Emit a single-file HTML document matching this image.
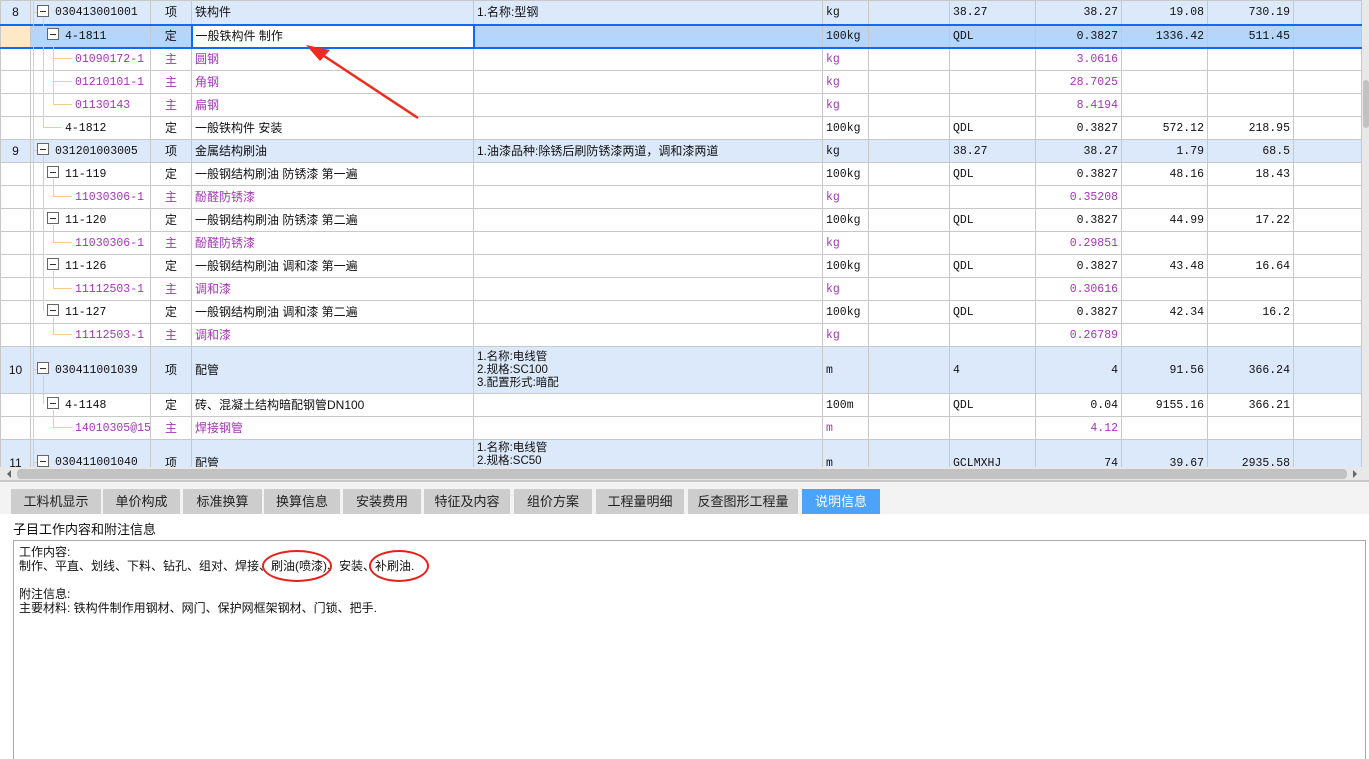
<!DOCTYPE html>
<html><head><meta charset="utf-8">
<style>
*{margin:0;padding:0;box-sizing:border-box}
body{width:1369px;height:759px;overflow:hidden;background:#fff;font-family:"Liberation Sans","Noto Sans CJK SC",sans-serif;font-size:12px;color:#111;position:relative}
#grid{position:absolute;left:0;top:0;width:1362px;height:467px;overflow:hidden;background:#fff}
table{border-collapse:collapse;table-layout:fixed;position:absolute;left:0;top:0;width:1361px}
td{border:1px solid #c8c8c8;height:23px;padding:0 3px;white-space:nowrap;overflow:hidden;vertical-align:middle;line-height:13px}
.m{font-family:"Liberation Mono","Noto Sans CJK SC",monospace;font-size:11.5px}
.r{text-align:right}
.c{text-align:center}
tr.x td{background:#dce9fb}
tr.s td{background:#b5d5fb;border-top:2px solid #0a6cf0;border-bottom:2px solid #0a6cf0}
tr.s td.n{background:#fde8c8}
.p{color:#a336b5}
td.code{font-family:"Liberation Mono","Noto Sans CJK SC",monospace;font-size:11.5px;padding:0}
.l0{margin-left:6px}.l1{margin-left:16px}.l2{margin-left:44px}.l1n{margin-left:34px}
.box{display:inline-block;vertical-align:middle;position:relative;width:12px;height:12px;border:1px solid #666;background:#fff;margin-right:6px;margin-top:-2px}
.box:after{content:"";position:absolute;left:2px;right:2px;top:5px;height:1px;background:#333}
.vl{position:absolute;width:1px;background:#f7c98a}
.hl{position:absolute;height:1px;background:#f7c98a}
tr.b td{vertical-align:top;padding-top:17px}
.tb{position:absolute;top:489px;height:25px;background:#cdcdcd;color:#222;text-align:center;line-height:25px;font-size:13px}
</style></head><body>
<div id="grid">
<table>
<colgroup><col style="width:30px"><col style="width:120px"><col style="width:41px"><col style="width:282px"><col style="width:349px"><col style="width:46px"><col style="width:81px"><col style="width:86px"><col style="width:86px"><col style="width:86px"><col style="width:86px"><col style="width:68px"></colgroup>
<tr class="x" style="height:24px"><td class="c">8</td><td class="code"><div class="l0"><span class="box"></span>030413001001</div></td><td class="c">项</td><td>铁构件</td><td>1.名称:型钢</td><td class="m">kg</td><td></td><td class="m">38.27</td><td class="m r">38.27</td><td class="m r">19.08</td><td class="m r">730.19</td><td></td></tr>
<tr class="s"><td class="n"></td><td class="code"><div class="l1"><span class="box"></span>4-1811</div></td><td class="c">定</td><td style="background:#fff;border:2px solid #0a6cf0">一般铁构件 制作</td><td></td><td class="m">100kg</td><td></td><td class="m">QDL</td><td class="m r">0.3827</td><td class="m r">1336.42</td><td class="m r">511.45</td><td></td></tr>
<tr><td></td><td class="code p"><div class="l2">01090172-1</div></td><td class="c p">主</td><td class="p">圆钢</td><td></td><td class="m p">kg</td><td></td><td></td><td class="m r p">3.0616</td><td></td><td></td><td></td></tr>
<tr><td></td><td class="code p"><div class="l2">01210101-1</div></td><td class="c p">主</td><td class="p">角钢</td><td></td><td class="m p">kg</td><td></td><td></td><td class="m r p">28.7025</td><td></td><td></td><td></td></tr>
<tr><td></td><td class="code p"><div class="l2">01130143</div></td><td class="c p">主</td><td class="p">扁钢</td><td></td><td class="m p">kg</td><td></td><td></td><td class="m r p">8.4194</td><td></td><td></td><td></td></tr>
<tr><td></td><td class="code"><div class="l1n">4-1812</div></td><td class="c">定</td><td>一般铁构件 安装</td><td></td><td class="m">100kg</td><td></td><td class="m">QDL</td><td class="m r">0.3827</td><td class="m r">572.12</td><td class="m r">218.95</td><td></td></tr>
<tr class="x"><td class="c">9</td><td class="code"><div class="l0"><span class="box"></span>031201003005</div></td><td class="c">项</td><td>金属结构刷油</td><td>1.油漆品种:除锈后刷防锈漆两道，调和漆两道</td><td class="m">kg</td><td></td><td class="m">38.27</td><td class="m r">38.27</td><td class="m r">1.79</td><td class="m r">68.5</td><td></td></tr>
<tr><td></td><td class="code"><div class="l1"><span class="box"></span>11-119</div></td><td class="c">定</td><td>一般钢结构刷油 防锈漆 第一遍</td><td></td><td class="m">100kg</td><td></td><td class="m">QDL</td><td class="m r">0.3827</td><td class="m r">48.16</td><td class="m r">18.43</td><td></td></tr>
<tr><td></td><td class="code p"><div class="l2">11030306-1</div></td><td class="c p">主</td><td class="p">酚醛防锈漆</td><td></td><td class="m p">kg</td><td></td><td></td><td class="m r p">0.35208</td><td></td><td></td><td></td></tr>
<tr><td></td><td class="code"><div class="l1"><span class="box"></span>11-120</div></td><td class="c">定</td><td>一般钢结构刷油 防锈漆 第二遍</td><td></td><td class="m">100kg</td><td></td><td class="m">QDL</td><td class="m r">0.3827</td><td class="m r">44.99</td><td class="m r">17.22</td><td></td></tr>
<tr><td></td><td class="code p"><div class="l2">11030306-1</div></td><td class="c p">主</td><td class="p">酚醛防锈漆</td><td></td><td class="m p">kg</td><td></td><td></td><td class="m r p">0.29851</td><td></td><td></td><td></td></tr>
<tr><td></td><td class="code"><div class="l1"><span class="box"></span>11-126</div></td><td class="c">定</td><td>一般钢结构刷油 调和漆 第一遍</td><td></td><td class="m">100kg</td><td></td><td class="m">QDL</td><td class="m r">0.3827</td><td class="m r">43.48</td><td class="m r">16.64</td><td></td></tr>
<tr><td></td><td class="code p"><div class="l2">11112503-1</div></td><td class="c p">主</td><td class="p">调和漆</td><td></td><td class="m p">kg</td><td></td><td></td><td class="m r p">0.30616</td><td></td><td></td><td></td></tr>
<tr><td></td><td class="code"><div class="l1"><span class="box"></span>11-127</div></td><td class="c">定</td><td>一般钢结构刷油 调和漆 第二遍</td><td></td><td class="m">100kg</td><td></td><td class="m">QDL</td><td class="m r">0.3827</td><td class="m r">42.34</td><td class="m r">16.2</td><td></td></tr>
<tr><td></td><td class="code p"><div class="l2">11112503-1</div></td><td class="c p">主</td><td class="p">调和漆</td><td></td><td class="m p">kg</td><td></td><td></td><td class="m r p">0.26789</td><td></td><td></td><td></td></tr>
<tr class="x" style="height:47px"><td class="c" style="height:47px">10</td><td class="code"><div class="l0"><span class="box"></span>030411001039</div></td><td class="c">项</td><td>配管</td><td style="font-size:11.5px">1.名称:电线管<br>2.规格:SC100<br>3.配置形式:暗配</td><td class="m">m</td><td></td><td class="m">4</td><td class="m r">4</td><td class="m r">91.56</td><td class="m r">366.24</td><td></td></tr>
<tr><td></td><td class="code"><div class="l1"><span class="box"></span>4-1148</div></td><td class="c">定</td><td>砖、混凝土结构暗配钢管DN100</td><td></td><td class="m">100m</td><td></td><td class="m">QDL</td><td class="m r">0.04</td><td class="m r">9155.16</td><td class="m r">366.21</td><td></td></tr>
<tr><td></td><td class="code p"><div class="l2">14010305@15</div></td><td class="c p">主</td><td class="p">焊接钢管</td><td></td><td class="m p">m</td><td></td><td></td><td class="m r p">4.12</td><td></td><td></td><td></td></tr>
<tr class="x b" style="height:47px"><td class="c" style="height:47px">11</td><td class="code" style="padding-top:16px"><div class="l0"><span class="box"></span>030411001040</div></td><td class="c">项</td><td>配管</td><td style="padding-top:2px;font-size:11.5px">1.名称:电线管<br>2.规格:SC50</td><td class="m">m</td><td></td><td class="m">GCLMXHJ</td><td class="m r">74</td><td class="m r">39.67</td><td class="m r">2935.58</td><td></td></tr>
</table>
<div class="vl" style="left:33px;top:0;height:470px"></div>
<div class="hl" style="left:33px;top:12px;width:4px"></div>
<div class="vl" style="left:43px;top:18px;height:110px"></div>
<div class="hl" style="left:43px;top:127px;width:18px"></div>
<div class="vl" style="left:53px;top:42px;height:62px"></div>
<div class="hl" style="left:53px;top:58px;width:19px"></div>
<div class="hl" style="left:53px;top:81px;width:19px"></div>
<div class="hl" style="left:53px;top:104px;width:19px"></div>
<div class="hl" style="left:33px;top:150px;width:4px"></div>
<div class="vl" style="left:43px;top:156px;height:155px"></div>
<div class="vl" style="left:53px;top:179px;height:18px"></div><div class="hl" style="left:53px;top:196px;width:19px"></div>
<div class="vl" style="left:53px;top:225px;height:18px"></div><div class="hl" style="left:53px;top:242px;width:19px"></div>
<div class="vl" style="left:53px;top:271px;height:18px"></div><div class="hl" style="left:53px;top:288px;width:19px"></div>
<div class="vl" style="left:53px;top:317px;height:18px"></div><div class="hl" style="left:53px;top:334px;width:19px"></div>
<div class="hl" style="left:33px;top:369px;width:4px"></div>
<div class="vl" style="left:43px;top:376px;height:28px"></div>
<div class="vl" style="left:53px;top:410px;height:17px"></div><div class="hl" style="left:53px;top:427px;width:19px"></div>
<div class="hl" style="left:33px;top:462px;width:4px"></div>
</div>
<svg style="position:absolute;left:0;top:0" width="1369" height="480">
<line x1="418" y1="118" x2="318" y2="52" stroke="#f02a1c" stroke-width="2.5"/>
<polygon points="306,45 330,50 320,61" fill="#f02a1c"/>
</svg>
<div style="position:absolute;left:1362px;top:0;width:7px;height:467px;background:#e8e8e8"></div>
<div style="position:absolute;left:1363px;top:80px;width:6px;height:48px;background:#c2c2c2;border-radius:3px"></div>
<div style="position:absolute;left:0;top:467px;width:1369px;height:13px;background:#e8e8e8"></div>
<div style="position:absolute;left:17px;top:469px;width:1330px;height:10px;background:#c2c2c2;border-radius:4px"></div>
<div style="position:absolute;left:7px;top:470px;width:0;height:0;border-top:4px solid transparent;border-bottom:4px solid transparent;border-right:4px solid #666"></div>
<div style="position:absolute;left:1353px;top:470px;width:0;height:0;border-top:4px solid transparent;border-bottom:4px solid transparent;border-left:4px solid #666"></div>
<div style="position:absolute;left:0;top:480px;width:1369px;height:279px;background:#f3f3f3;border-top:2px solid #c8c8c8"></div>
<div style="position:absolute;left:0;top:514px;width:1369px;height:245px;background:#fff"></div>
<div class="tb" style="left:11px;width:90px">工料机显示</div>
<div class="tb" style="left:103px;width:77px">单价构成</div>
<div class="tb" style="left:183px;width:79px">标准换算</div>
<div class="tb" style="left:264px;width:76px">换算信息</div>
<div class="tb" style="left:343px;width:78px">安装费用</div>
<div class="tb" style="left:424px;width:86px">特征及内容</div>
<div class="tb" style="left:514px;width:78px">组价方案</div>
<div class="tb" style="left:596px;width:88px">工程量明细</div>
<div class="tb" style="left:688px;width:110px">反查图形工程量</div>
<div class="tb" style="left:802px;width:78px;background:#4da3f7;color:#fff">说明信息</div>
<div style="position:absolute;left:13px;top:519px;font-size:13px">子目工作内容和附注信息</div>
<div style="position:absolute;left:13px;top:540px;width:1353px;height:219px;border:1px solid #aaa;border-bottom:none;background:#fff;padding:4px 5px;font-size:12px;line-height:14px">
工作内容:<br>制作、平直、划线、下料、钻孔、组对、焊接、刷油(喷漆)、安装、补刷油.<br><br>附注信息:<br>主要材料: 铁构件制作用钢材、网门、保护网框架钢材、门锁、把手.
</div>
<div style="position:absolute;left:262px;top:550px;width:70px;height:32px;border:2.5px solid #e8201a;border-radius:50%"></div>
<div style="position:absolute;left:369px;top:550px;width:60px;height:32px;border:2.5px solid #e8201a;border-radius:50%"></div>
</body></html>
